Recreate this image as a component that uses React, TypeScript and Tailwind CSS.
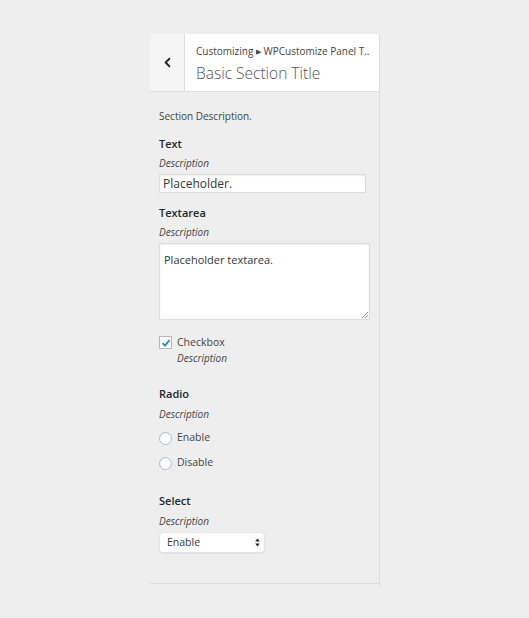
import { ChevronLeft } from "lucide-react";

const Label = ({ text }: { text: string }) => (
  <p className="text-[11px] font-semibold leading-[16px] text-[#23282d]">{text}</p>
);

const Desc = ({ text, className = "" }: { text: string; className?: string }) => (
  <p className={`text-[10px] italic leading-[14px] text-[#444] ${className}`}>{text}</p>
);

const Radio = ({ label }: { label: string }) => (
  <label className="flex items-center gap-[5px] h-[14px]">
    <span className="w-[13px] h-[13px] rounded-full border border-[#b4b9be] bg-white shadow-[inset_0_1px_2px_rgba(0,0,0,0.07)]" />
    <span className="text-[10.5px] text-[#444]">{label}</span>
  </label>
);

export default function App() {
  return (
    <div
      className="w-[529px] h-[618px] bg-[#eeeeee] pt-[34px] pl-[150px]"
      style={{ fontFamily: '"Open Sans", "Noto Sans", sans-serif' }}
    >
      <div className="w-[230px] h-[552px] border-r border-[#dddddd]">
        {/* header */}
        <div className="flex h-[58px] border-b border-[#dddddd] bg-white">
          <div className="w-[35px] flex items-center justify-center bg-[#f5f5f5] border-r border-[#dddddd]">
            <ChevronLeft className="w-[15px] h-[15px] text-[#23282d]" strokeWidth={3} />
          </div>
          <div className="flex flex-col pl-[11px] pt-[10px]">
            <p className="text-[10px] leading-[14px] text-[#444] whitespace-nowrap">
              Customizing <span className="text-[7px] relative -top-[1px]">▶</span> WPCustomize Panel T..
            </p>
            <p className="text-[15.5px] font-light leading-[20px] mt-[3px] text-[#555]">
              Basic Section Title
            </p>
          </div>
        </div>

        {/* body */}
        <div className="pl-[9px] pr-[10px] pt-[17px] h-[492px] border-b border-[#dddddd]">
          <p className="text-[10px] leading-[14px] text-[#444]">Section Description.</p>

          <div className="mt-[13px]">
            <Label text="Text" />
            <Desc text="Description" className="mt-[4px]" />
            <div className="mt-[4px] w-[207px] h-[19px] bg-white border border-[#dddddd] shadow-[inset_0_1px_2px_rgba(0,0,0,0.07)] flex items-center px-[3px]">
              <span className="text-[12px] text-[#32373c]">Placeholder.</span>
            </div>
          </div>

          <div className="mt-[12px]">
            <Label text="Textarea" />
            <Desc text="Description" className="mt-[4px]" />
            <div className="relative mt-[4px] w-[211px] h-[77px] bg-white border border-[#dddddd] shadow-[inset_0_1px_2px_rgba(0,0,0,0.07)] px-[4px] pt-[2px]">
              <span className="text-[11px] text-[#32373c]">Placeholder textarea.</span>
              <svg className="absolute right-[1px] bottom-[1px]" width="6" height="6" viewBox="0 0 6 6">
                <path d="M6 0 L0 6 M6 3 L3 6" stroke="#777" strokeWidth="0.8" />
              </svg>
            </div>
          </div>

          <div className="mt-[15px] flex gap-[5px]">
            <span className="mt-[1px] w-[13px] h-[13px] border border-[#b4b9be] bg-white flex items-center justify-center">
              <svg width="10" height="10" viewBox="0 0 10 10">
                <path d="M1.5 5.2 L4 7.6 L8.6 2" fill="none" stroke="#1e8cbe" strokeWidth="1.8" />
              </svg>
            </span>
            <div>
              <p className="text-[10.5px] leading-[15px] text-[#444]">Checkbox</p>
              <Desc text="Description" className="mt-[1px]" />
            </div>
          </div>

          <div className="mt-[21px]">
            <Label text="Radio" />
            <Desc text="Description" className="mt-[5px]" />
            <div className="mt-[10px] flex flex-col gap-[11px]">
              <Radio label="Enable" />
              <Radio label="Disable" />
            </div>
          </div>

          <div className="mt-[23px]">
            <Label text="Select" />
            <Desc text="Description" className="mt-[5px]" />
            <div className="mt-[4px] w-[106px] h-[21px] bg-white rounded-[4px] border border-[#e4e4e4] shadow-[0_1px_1px_rgba(0,0,0,0.06)] flex items-center justify-between pl-[7px] pr-[4px]">
              <span className="text-[10.5px] text-[#32373c]">Enable</span>
              <svg width="5" height="9" viewBox="0 0 5 9">
                <path d="M2.5 0.5 L4.8 3.6 L0.2 3.6 Z M2.5 8.5 L4.8 5.4 L0.2 5.4 Z" fill="#222" />
              </svg>
            </div>
          </div>
        </div>
      </div>
    </div>
  );
}
